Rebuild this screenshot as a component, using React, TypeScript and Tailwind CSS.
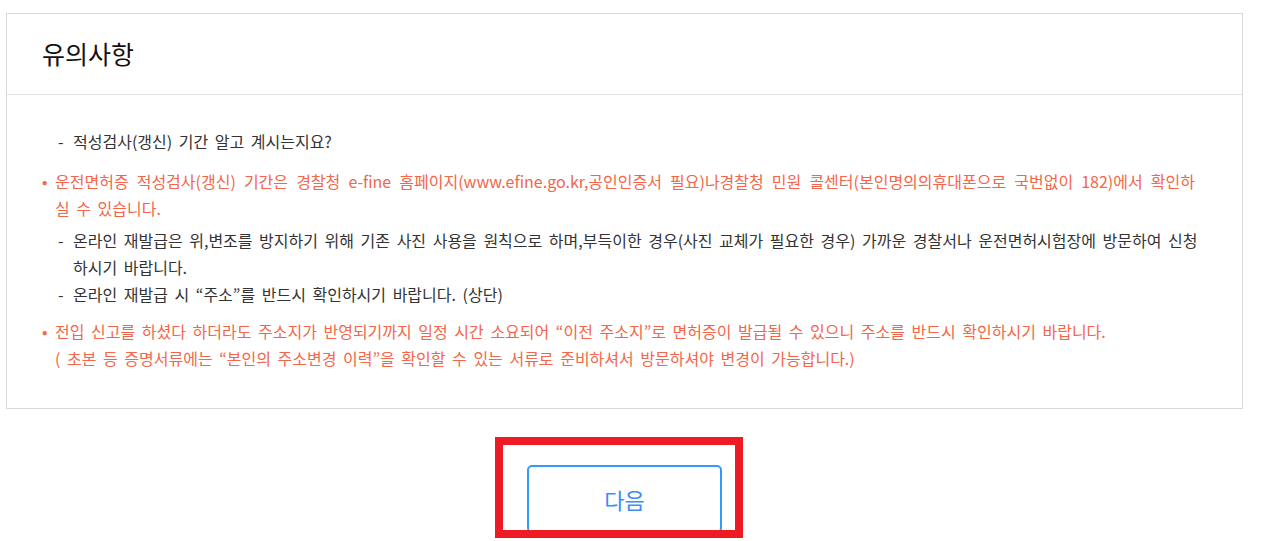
import React from "react";

const font = { fontFamily: '"Noto Sans CJK KR", "Noto Sans", sans-serif' };

function Dash({ children, className = "" }: { children: React.ReactNode; className?: string }) {
  return (
    <li className={`flex text-[#333333] ${className}`}>
      <span className="w-[15px] shrink-0">-</span>
      <span>{children}</span>
    </li>
  );
}

export default function App() {
  return (
    <div className="relative w-[1268px] h-[541px] bg-white overflow-hidden" style={font}>
      <div className="pt-[13px] pl-[6px] w-[1243px]">
        <div className="border border-[#d9d9d9]">
          <div className="h-[81px] border-b border-[#e3e3e3] flex items-center pl-[35px]">
            <h2 className="text-[25px] text-[#111111] leading-none pb-[1px]">유의사항</h2>
          </div>
          <ul className="pt-[33px] pb-[36px] pl-[48px] pr-[36px] text-[16px] leading-[27px] [word-spacing:3px]">
            <Dash className="pl-[3px]">적성검사(갱신) 기간 알고 계시는지요?</Dash>
            <li className="flex text-[#f3664a] mt-[13px] -ml-[13px]">
              <span className="w-[13px] shrink-0">•</span>
              <span>
                <span className="whitespace-nowrap [word-spacing:4.5px]">
                  운전면허증 적성검사(갱신) 기간은 경찰청 e-fine 홈페이지(www.efine.go.kr,공인인증서 필요)나경찰청 민원 콜센터(본인명의의휴대폰으로 국번없이 182)에서 확인하
                </span>
                <br />실 수 있습니다.
              </span>
            </li>
            <Dash className="mt-[5px] pl-[3px]">
              온라인 재발급은 위,변조를 방지하기 위해 기존 사진 사용을 원칙으로 하며,부득이한 경우(사진 교체가 필요한 경우) 가까운 경찰서나 운전면허시험장에 방문하여 신청하시기 바랍니다.
            </Dash>
            <Dash className="pl-[3px]">온라인 재발급 시 “주소”를 반드시 확인하시기 바랍니다. (상단)</Dash>
            <li className="flex text-[#f3664a] mt-[10px] -ml-[13px]">
              <span className="w-[13px] shrink-0">•</span>
              <span>
                전입 신고를 하셨다 하더라도 주소지가 반영되기까지 일정 시간 소요되어 “이전 주소지”로 면허증이 발급될 수 있으니 주소를 반드시 확인하시기 바랍니다.
                <br />( 초본 등 증명서류에는 “본인의 주소변경 이력”을 확인할 수 있는 서류로 준비하셔서 방문하셔야 변경이 가능합니다.)
              </span>
            </li>
          </ul>
        </div>
        <div className="flex justify-center pt-[56px]">
          <button className="w-[195px] h-[68px] border-2 border-[#3399ff] rounded-[5px] bg-white text-[22px] text-[#3a8ef5]" style={font}>
            다음
          </button>
        </div>
      </div>
      <div className="absolute left-[495px] top-[437px] w-[248px] h-[101px] border-[8px] border-[#ed1c24] pointer-events-none" />
    </div>
  );
}
